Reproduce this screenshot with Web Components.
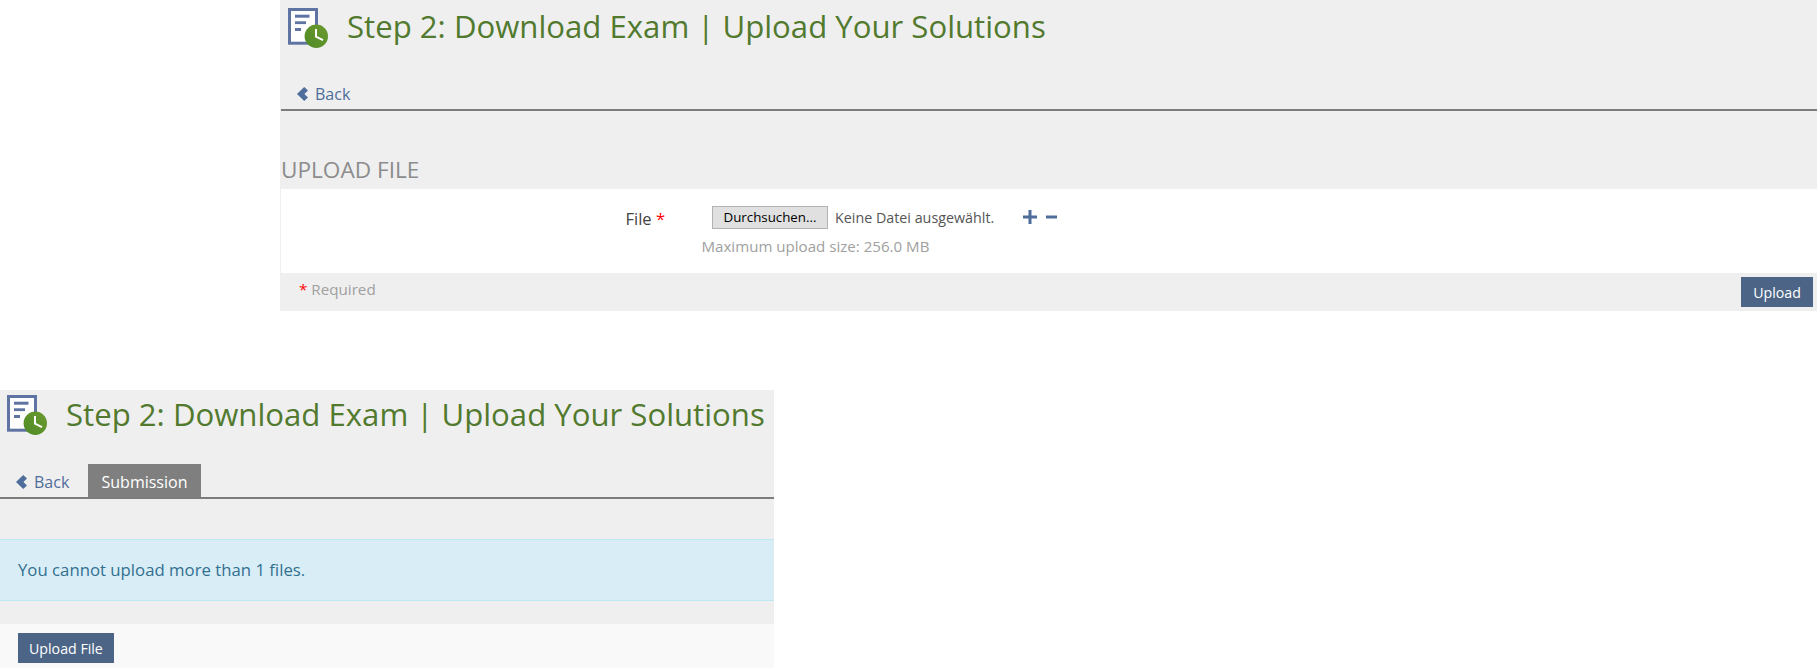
<!DOCTYPE html>
<html>
<head>
<meta charset="utf-8">
<style>
  html, body { margin: 0; background: #fff; }
  body { font-family: "Open Sans", sans-serif; height: 668px; overflow: hidden; }
  #top { margin-left: 280px; height: 311px; }
  #bottom { margin-top: 79px; width: 774px; height: 278px; --title-top: 5px; --title-left: 7px; --title-height: 76px; --title-shift: -1px; --rule-left: 0; }
</style>
</head>
<body>
<exam-panel id="top">
  <exam-header>
    <back-link></back-link>
  </exam-header>
  <upload-form></upload-form>
</exam-panel>

<exam-panel id="bottom">
  <exam-header>
    <back-link></back-link>
    <tab-item>Submission</tab-item>
  </exam-header>
  <info-alert>You cannot upload more than 1 files.</info-alert>
  <action-bar><blue-button>Upload File</blue-button></action-bar>
</exam-panel>

<script>
class ExamPanel extends HTMLElement {
  constructor() {
    super();
    this.attachShadow({ mode: "open" });
    this.shadowRoot.innerHTML = `
      <style>
        :host { display: flex; flex-direction: column; background: #efefef; overflow: hidden; }
      </style>
      <slot></slot>`;
  }
}

class ExamHeader extends HTMLElement {
  constructor() {
    super();
    this.attachShadow({ mode: "open" });
    this.shadowRoot.innerHTML = `
      <style>
        :host { display: block; flex: none; }
        .title { display: flex; align-items: flex-start; height: var(--title-height, 78px); padding: var(--title-top, 8px) 0 0 var(--title-left, 8px); box-sizing: border-box; }
        svg { width: 40px; height: 40px; flex: none; }
        h1 { margin: var(--title-shift, -2px) 0 0 19px; font: 400 31.15px/40px "Open Sans", sans-serif; color: #527a2e; white-space: nowrap; }
        nav { display: flex; align-items: flex-end; height: 31px; border-bottom: 2px solid #7d7d7d; margin-left: var(--rule-left, 1px); }
      </style>
      <div class="title">
        <svg viewBox="0 0 40 40">
          <defs>
            <linearGradient id="clock" x1="0" y1="1" x2="1" y2="0">
              <stop offset="0" stop-color="#4f8a25"/>
              <stop offset="1" stop-color="#6b9a30"/>
            </linearGradient>
          </defs>
          <rect x="0" y="0" width="30" height="36.7" fill="#5f74a3"/>
          <rect x="3" y="3" width="24" height="30.7" fill="#fff"/>
          <rect x="7" y="6.7" width="14.5" height="3" fill="#5f74a3"/>
          <rect x="7" y="13.3" width="11" height="2.8" fill="#5f74a3"/>
          <rect x="7" y="20" width="6" height="3" fill="#5f74a3"/>
          <circle cx="28.3" cy="28.3" r="11.7" fill="url(#clock)"/>
          <path d="M28 21v7.7l7 3.5" fill="none" stroke="#fff" stroke-width="2"/>
        </svg>
        <h1>Step 2: Download Exam | Upload Your Solutions</h1>
      </div>
      <nav><slot></slot></nav>`;
  }
}

class BackLink extends HTMLElement {
  constructor() {
    super();
    this.attachShadow({ mode: "open" });
    this.shadowRoot.innerHTML = `
      <style>
        :host { display: inline-flex; align-items: center; height: 33px; width: 88px; box-sizing: border-box; padding: 2px 0 0 16px; font: 400 16px "Open Sans", sans-serif; color: #4e6d9b; }
        svg { width: 12px; height: 14px; margin-right: 6px; }
      </style>
      <svg viewBox="0 0 12 14"><path d="M7.200 0l3.800 3.400L7.400 7l3.600 3.600L7.200 14 0 7z" fill="#4e6d9b"/></svg>
      <span>Back</span>`;
  }
}

class TabItem extends HTMLElement {
  constructor() {
    super();
    this.attachShadow({ mode: "open" });
    this.shadowRoot.innerHTML = `
      <style>
        :host { display: inline-flex; align-items: center; justify-content: center; box-sizing: border-box; height: 33px; width: 113px; padding-top: 2px; background: #7f7f7f; color: #fff; font: 400 16px "Open Sans", sans-serif; }
      </style>
      <slot></slot>`;
  }
}

class InfoAlert extends HTMLElement {
  constructor() {
    super();
    this.attachShadow({ mode: "open" });
    this.shadowRoot.innerHTML = `
      <style>
        :host { display: flex; align-items: center; flex: none; box-sizing: border-box; height: 62px; margin: 40px 0 23px; padding: 0 18px 2px; background: #d9edf7; border: solid #bce8f1; border-width: 1px 0; color: #31708f; font: 400 16.75px "Open Sans", sans-serif; }
      </style>
      <slot></slot>`;
  }
}

class ActionBar extends HTMLElement {
  constructor() {
    super();
    this.attachShadow({ mode: "open" });
    this.shadowRoot.innerHTML = `
      <style>
        :host { display: block; flex: 1; background: #f9f9f9; padding: 9px 18px; }
      </style>
      <slot></slot>`;
  }
}

class BlueButton extends HTMLElement {
  constructor() {
    super();
    this.attachShadow({ mode: "open" });
    this.shadowRoot.innerHTML = `
      <style>
        :host { display: inline-flex; align-items: center; justify-content: center; box-sizing: border-box; height: 30px; min-width: 72px; padding: 0 11px; background: #4c6586; color: #fff; font: 400 14.2px "Open Sans", sans-serif; }
      </style>
      <slot></slot>`;
  }
}

class UploadForm extends HTMLElement {
  constructor() {
    super();
    this.attachShadow({ mode: "open" });
    this.shadowRoot.innerHTML = `
      <style>
        :host { display: block; flex: 1; font-family: "Open Sans", sans-serif; }
        h2 { margin: 0; height: 78px; box-sizing: border-box; padding: 44px 0 0 1px; font: 400 22.6px/30px "Open Sans", sans-serif; color: #8c8c8c; }
        .body { display: grid; grid-template-columns: 384px auto; height: 84px; margin-left: 1px; background: #fff; box-sizing: border-box; padding-top: 15px; }
        label { font-size: 16.5px; line-height: 30px; color: #444; text-align: right; }
        label b, .req b { font-weight: 400; color: #f00; }
        .field { padding-left: 47px; }
        .row { display: flex; align-items: center; height: 26px; font-size: 14.3px; color: #555; }
        .browse { box-sizing: border-box; width: 116px; height: 23px; margin-right: 7px; background: #e0e0e0; border: 1px solid #b3b3b3; color: #000; font-size: 13.3px; line-height: 21px; text-align: center; }
        .icons { display: flex; gap: 8px; margin-left: 29px; }
        svg { width: 14px; height: 14px; display: block; }
        .hint { margin: 4px 0 0 -10.500px; font-size: 15.1px; line-height: 24px; color: #a0a0a0; }
        .foot { display: flex; align-items: center; justify-content: space-between; height: 38px; padding: 0 4px 0 19px; }
        .req { font-size: 15.2px; color: #a0a0a0; margin-top: -7px; }
      </style>
      <h2>UPLOAD FILE</h2>
      <div class="body">
        <label>File <b>*</b></label>
        <div class="field">
          <div class="row">
            <span class="browse">Durchsuchen...</span>
            <span>Keine Datei ausgewählt.</span>
            <span class="icons">
              <svg viewBox="0 0 14 14"><path d="M5.500 0h3v5.500H14v3H8.500V14h-3V8.500H0v-3h5.500z" fill="#4e6d9b"/></svg>
              <svg viewBox="0 0 14 14"><path d="M1 5.500h11v3H1z" fill="#4e6d9b"/></svg>
            </span>
          </div>
          <div class="hint">Maximum upload size: 256.0 MB</div>
        </div>
      </div>
      <div class="foot">
        <span class="req"><b>*</b> Required</span>
        <blue-button>Upload</blue-button>
      </div>`;
  }
}

customElements.define("exam-panel", ExamPanel);
customElements.define("exam-header", ExamHeader);
customElements.define("back-link", BackLink);
customElements.define("tab-item", TabItem);
customElements.define("info-alert", InfoAlert);
customElements.define("action-bar", ActionBar);
customElements.define("blue-button", BlueButton);
customElements.define("upload-form", UploadForm);
</script>
</body>
</html>
